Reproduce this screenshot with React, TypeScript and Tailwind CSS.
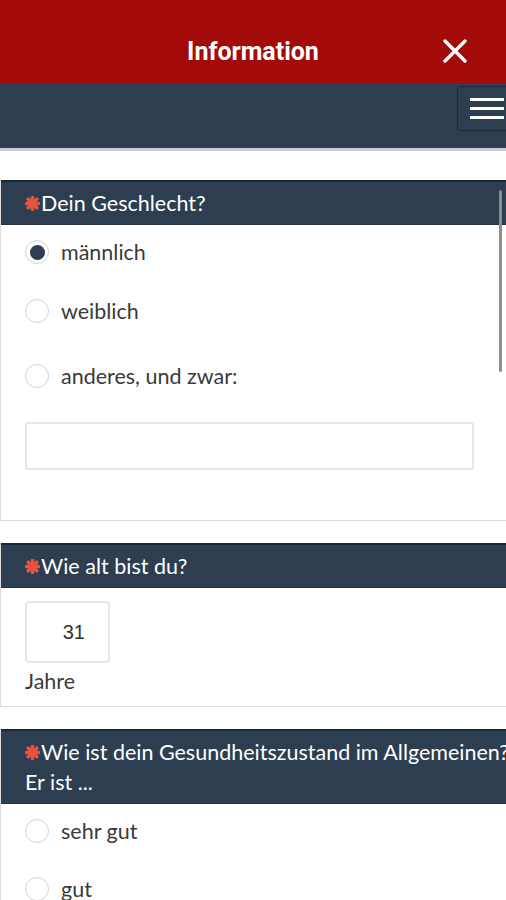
import { ReactNode } from "react";

function Asterisk() {
  return (
    <svg width="15" height="15" viewBox="0 0 16 16" className="mr-[1px] shrink-0">
      <g stroke="#e8533f" strokeWidth="3.8" strokeLinecap="round">
        <line x1="8" y1="1.5" x2="8" y2="14.5" />
        <line x1="1.5" y1="8" x2="14.5" y2="8" />
        <line x1="3.4" y1="3.4" x2="12.6" y2="12.6" />
        <line x1="12.6" y1="3.4" x2="3.4" y2="12.6" />
      </g>
    </svg>
  );
}

function Radio({ label, checked = false }: { label: string; checked?: boolean }) {
  return (
    <label className="flex h-[30px] items-center gap-3">
      <span className="flex h-[24px] w-[24px] shrink-0 items-center justify-center rounded-full border border-[#cfd3d7] bg-white">
        {checked && <span className="h-[15px] w-[15px] rounded-full bg-[#2c3e50]" />}
      </span>
      <span className="text-[21.5px] leading-[30px] text-[#3a3a3a]">{label}</span>
    </label>
  );
}

function Panel({ title, children }: { title: ReactNode; children: ReactNode }) {
  return (
    <section className="border-b border-l border-[#dcdcdc]">
      <div className="border-t-2 border-b border-t-[#1b2836] border-b-[#24323f] bg-[#2c3e50] py-[6px] pl-6 text-[21.5px] leading-[30px] whitespace-nowrap text-white">
        {title}
      </div>
      {children}
    </section>
  );
}

export default function App() {
  return (
    <div className="relative min-h-[900px] overflow-hidden bg-white font-['Lato','Noto_Sans',sans-serif]">
      <header className="grid h-[84px] grid-cols-[1fr_auto_1fr] items-center bg-[#a30a0a] pt-[18px]">
        <div />
        <h1 className="pt-[2px] font-['Roboto',sans-serif] text-[25px] font-bold text-white">Information</h1>
        <div className="flex justify-end pr-[39px]">
          <svg width="24" height="24" viewBox="0 0 24 24">
            <path d="M2 2 L22 22 M22 2 L2 22" stroke="white" strokeWidth="3.4" strokeLinecap="round" />
          </svg>
        </div>
      </header>

      <nav className="flex h-[67px] items-start justify-end border-b-[3px] border-[#c9cdd1] bg-[#2c3e50] pt-[2px]">
        <button
          type="button"
          aria-label="Menü"
          className="mr-[-8px] flex h-[45px] w-[57px] flex-col items-start justify-center gap-[6px] rounded-[4px] border border-[#1c2936] pl-[12px]"
        >
          <span className="h-[3px] w-[34px] bg-white" />
          <span className="h-[3px] w-[34px] bg-white" />
          <span className="h-[3px] w-[34px] bg-white" />
        </button>
      </nav>

      <div className="flex flex-col gap-[22px] pt-[29px]">
        <div className="relative">
          <Panel
            title={
              <span className="flex items-center">
                <Asterisk />
                Dein Geschlecht?
              </span>
            }
          >
            <div className="flex flex-col px-6 pt-3 pb-[50px]">
              <Radio label="männlich" checked />
              <div className="mt-[29px]">
                <Radio label="weiblich" />
              </div>
              <div className="mt-[35px]">
                <Radio label="anderes, und zwar:" />
              </div>
              <input
                type="text"
                className="mt-[31px] h-[48px] w-[449px] rounded-[3px] border-2 border-[#e1e7ef] outline-none"
              />
            </div>
          </Panel>
          <div className="absolute top-[10px] right-[4px] h-[182px] w-[3px] rounded-full bg-[#8e8e8e]" />
        </div>

        <Panel
          title={
            <span className="flex items-center">
              <Asterisk />
              Wie alt bist du?
            </span>
          }
        >
          <div className="flex flex-col px-6 pt-[13px] pb-[10px]">
            <div className="flex h-[62px] w-[85px] items-center justify-end rounded-[4px] border-2 border-[#e1e7ef] pr-[23px] font-['Liberation_Sans',sans-serif] text-[20px] text-[#333]">
              31
            </div>
            <div className="mt-[3px] text-[21.5px] leading-[30px] text-[#3a3a3a]">Jahre</div>
          </div>
        </Panel>

        <Panel
          title={
            <span className="block">
              <span className="flex items-center">
                <Asterisk />
                Wie ist dein Gesundheitszustand im Allgemeinen?
              </span>
              <span className="block">Er ist ...</span>
            </span>
          }
        >
          <div className="flex flex-col gap-[28px] px-6 pt-3 pb-6">
            <Radio label="sehr gut" />
            <Radio label="gut" />
          </div>
        </Panel>
      </div>
    </div>
  );
}
